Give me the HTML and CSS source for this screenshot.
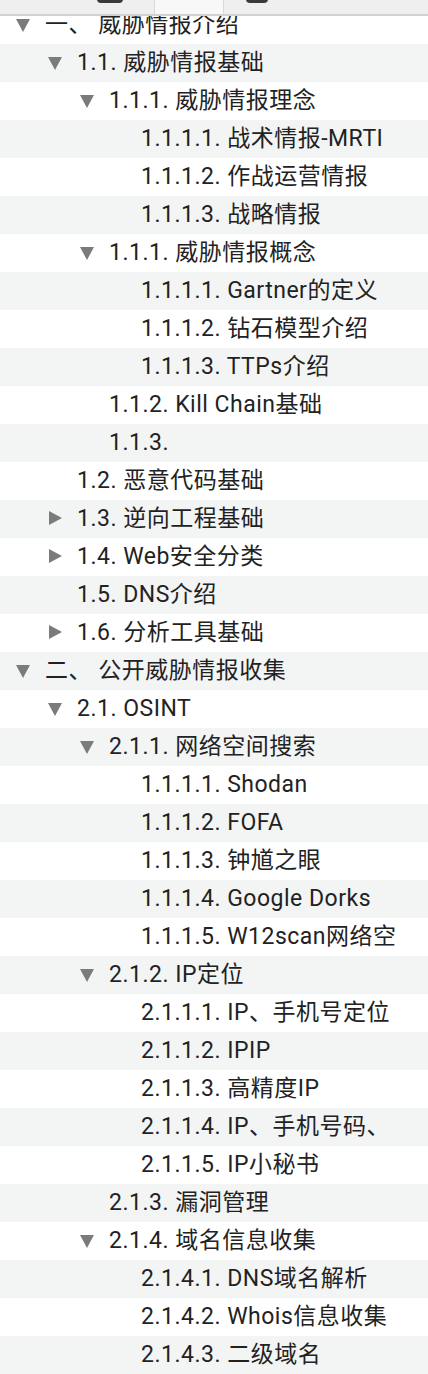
FILE: index.html
```html
<!DOCTYPE html>
<html lang="zh">
<head>
<meta charset="utf-8">
<link rel="stylesheet" href="styles.css">
</head>
<body>
<header class="topbar">
  <span class="icon-stub icon-stub-left"></span>
  <span class="tab-active"></span>
  <span class="icon-stub icon-stub-right"></span>
</header>
<ul class="toc">
  <li class="row l0"><span class="tri down"></span><span class="label">一、 威胁情报介绍</span></li>
  <li class="row l1"><span class="tri down"></span><span class="label">1.1. 威胁情报基础</span></li>
  <li class="row l2"><span class="tri down"></span><span class="label">1.1.1. 威胁情报理念</span></li>
  <li class="row l3"><span class="tri"></span><span class="label">1.1.1.1. 战术情报-MRTI</span></li>
  <li class="row l3"><span class="tri"></span><span class="label">1.1.1.2. 作战运营情报</span></li>
  <li class="row l3"><span class="tri"></span><span class="label">1.1.1.3. 战略情报</span></li>
  <li class="row l2"><span class="tri down"></span><span class="label">1.1.1. 威胁情报概念</span></li>
  <li class="row l3"><span class="tri"></span><span class="label">1.1.1.1. Gartner的定义</span></li>
  <li class="row l3"><span class="tri"></span><span class="label">1.1.1.2. 钻石模型介绍</span></li>
  <li class="row l3"><span class="tri"></span><span class="label">1.1.1.3. TTPs介绍</span></li>
  <li class="row l2"><span class="tri"></span><span class="label">1.1.2. Kill Chain基础</span></li>
  <li class="row l2"><span class="tri"></span><span class="label">1.1.3.</span></li>
  <li class="row l1"><span class="tri"></span><span class="label">1.2. 恶意代码基础</span></li>
  <li class="row l1"><span class="tri right"></span><span class="label">1.3. 逆向工程基础</span></li>
  <li class="row l1"><span class="tri right"></span><span class="label">1.4. Web安全分类</span></li>
  <li class="row l1"><span class="tri"></span><span class="label">1.5. DNS介绍</span></li>
  <li class="row l1"><span class="tri right"></span><span class="label">1.6. 分析工具基础</span></li>
  <li class="row l0"><span class="tri down"></span><span class="label">二、 公开威胁情报收集</span></li>
  <li class="row l1"><span class="tri down"></span><span class="label">2.1. OSINT</span></li>
  <li class="row l2"><span class="tri down"></span><span class="label">2.1.1. 网络空间搜索</span></li>
  <li class="row l3"><span class="tri"></span><span class="label">1.1.1.1. Shodan</span></li>
  <li class="row l3"><span class="tri"></span><span class="label">1.1.1.2. FOFA</span></li>
  <li class="row l3"><span class="tri"></span><span class="label">1.1.1.3. 钟馗之眼</span></li>
  <li class="row l3"><span class="tri"></span><span class="label">1.1.1.4. Google Dorks</span></li>
  <li class="row l3"><span class="tri"></span><span class="label">1.1.1.5. W12scan网络空</span></li>
  <li class="row l2"><span class="tri down"></span><span class="label">2.1.2. IP定位</span></li>
  <li class="row l3"><span class="tri"></span><span class="label">2.1.1.1. IP、手机号定位</span></li>
  <li class="row l3"><span class="tri"></span><span class="label">2.1.1.2. IPIP</span></li>
  <li class="row l3"><span class="tri"></span><span class="label">2.1.1.3. 高精度IP</span></li>
  <li class="row l3"><span class="tri"></span><span class="label">2.1.1.4. IP、手机号码、</span></li>
  <li class="row l3"><span class="tri"></span><span class="label">2.1.1.5. IP小秘书</span></li>
  <li class="row l2"><span class="tri"></span><span class="label">2.1.3. 漏洞管理</span></li>
  <li class="row l2"><span class="tri down"></span><span class="label">2.1.4. 域名信息收集</span></li>
  <li class="row l3"><span class="tri"></span><span class="label">2.1.4.1. DNS域名解析</span></li>
  <li class="row l3"><span class="tri"></span><span class="label">2.1.4.2. Whois信息收集</span></li>
  <li class="row l3"><span class="tri"></span><span class="label">2.1.4.3. 二级域名</span></li>
</ul>
</body>
</html>
```
FILE: styles.css
```css
html, body {
  margin: 0;
  padding: 0;
  background: #ffffff;
}

body {
  font-family: "Roboto", "Noto Sans CJK SC", sans-serif;
  color: #222222;
  overflow: hidden;
}

.topbar {
  position: fixed;
  top: 0;
  left: 0;
  right: 0;
  height: 14px;
  background: #efefef;
  border-bottom: 2px solid #d2d2d2;
  z-index: 2;
}

.icon-stub {
  position: absolute;
  top: -6px;
  height: 9px;
  background: #3a3a3a;
  border-radius: 4px;
}

.icon-stub-left {
  left: 97px;
  width: 26px;
}

.icon-stub-right {
  left: 246px;
  width: 22px;
}

.tab-active {
  position: absolute;
  top: 0;
  left: 154px;
  width: 68px;
  height: 14px;
  background: #f8f8f8;
  border-left: 1px solid #dadada;
  border-right: 1px solid #dadada;
}

.toc {
  list-style: none;
  margin: 6px 0 0 0;
  padding: 0;
}

.row {
  display: flex;
  align-items: center;
  height: 38px;
  white-space: nowrap;
  overflow: hidden;
  font-size: 23px;
  letter-spacing: 0.5px;
}

.row:nth-child(even) {
  background: #f3f4f4;
}

.l0 { padding-left: 16px; }
.l1 { padding-left: 48px; }
.l2 { padding-left: 80px; }
.l3 { padding-left: 112px; }

.tri {
  flex: 0 0 29px;
  height: 16px;
  position: relative;
}

.tri.down::before {
  content: "";
  position: absolute;
  left: 0;
  top: 2px;
  border-left: 7.5px solid transparent;
  border-right: 7.5px solid transparent;
  border-top: 13px solid #7b7b7b;
}

.tri.right::before {
  content: "";
  position: absolute;
  left: 1px;
  top: 0;
  border-top: 7.5px solid transparent;
  border-bottom: 7.5px solid transparent;
  border-left: 13px solid #7b7b7b;
}

.label {
  line-height: 38px;
}
```
